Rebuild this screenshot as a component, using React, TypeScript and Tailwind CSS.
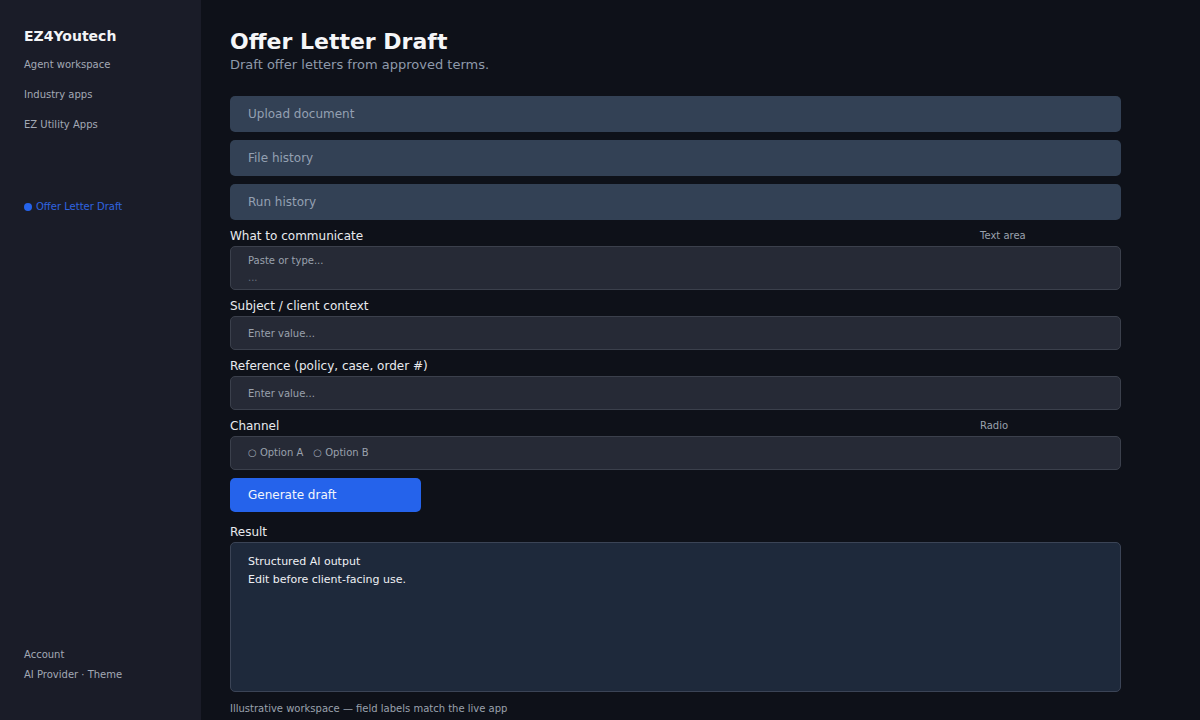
import React from "react";

const font = { fontFamily: '"DejaVu Sans", Verdana, sans-serif' };

function FieldLabel({ label, kind }: { label: string; kind?: string }) {
  return (
    <div className="flex items-start mb-[2px]">
      <span className="w-[750px] pt-[1px] text-[12px] leading-[15px] text-[#e8eaee]">{label}</span>
      {kind && <span className="text-[10px] leading-[15px] text-[#9aa1ad]">{kind}</span>}
    </div>
  );
}

function Collapsible({ title }: { title: string }) {
  return (
    <div className="h-[36px] rounded-[5px] bg-[#334155] flex items-center pl-[18px] text-[12px] text-[#94a0b2]">
      {title}
    </div>
  );
}

function InputBox({ placeholder }: { placeholder: string }) {
  return (
    <div className="h-[34px] rounded-[5px] bg-[#262a36] border border-[#3b404c] flex items-center pl-[17px] text-[10px] text-[#9aa1ad]">
      {placeholder}
    </div>
  );
}

export default function App() {
  return (
    <div className="flex w-full h-[720px] bg-[#0e1119] overflow-hidden" style={font}>
      <aside className="w-[201px] shrink-0 bg-[#1a1c28] flex flex-col pl-[24px] pt-[26px] pb-[38px]">
        <div className="text-[14px] leading-[20px] font-bold text-[#f3f4f6]">EZ4Youtech</div>
        <nav className="mt-[12px] flex flex-col gap-[16px] text-[10px] leading-[14px] text-[#a3a9b5]">
          <div>Agent workspace</div>
          <div>Industry apps</div>
          <div>EZ Utility Apps</div>
        </nav>
        <div className="mt-[68px] flex items-center text-[10px] leading-[14px] text-[#2f64e0]">
          <span className="w-[8px] h-[8px] rounded-full bg-[#2563eb] mr-[4px]" />
          Offer Letter Draft
        </div>
        <div className="mt-auto flex flex-col gap-[6px] text-[10px] leading-[14px] text-[#a3a9b5]">
          <div>Account</div>
          <div>AI Provider · Theme</div>
        </div>
      </aside>
      <main className="flex-1 pl-[29px] pt-[28px]">
        <div className="w-[891px]">
          <h1 className="text-[22px] leading-[28px] font-bold text-[#f5f6f8]">Offer Letter Draft</h1>
          <p className="text-[13px] leading-[18px] text-[#8f9aab]">Draft offer letters from approved terms.</p>
          <div className="mt-[22px] flex flex-col gap-[8px]">
            <Collapsible title="Upload document" />
            <Collapsible title="File history" />
            <Collapsible title="Run history" />
            <div>
              <FieldLabel label="What to communicate" kind="Text area" />
              <div className="h-[44px] rounded-[5px] bg-[#262a36] border border-[#3b404c] pl-[17px] pt-[5px] text-[10px] leading-[17px] text-[#9aa1ad]">
                <div>Paste or type...</div>
                <div className="text-[#6b7280]">...</div>
              </div>
            </div>
            <div>
              <FieldLabel label="Subject / client context" />
              <InputBox placeholder="Enter value..." />
            </div>
            <div>
              <FieldLabel label="Reference (policy, case, order #)" />
              <InputBox placeholder="Enter value..." />
            </div>
            <div>
              <FieldLabel label="Channel" kind="Radio" />
              <div className="h-[34px] rounded-[5px] bg-[#262a36] border border-[#3b404c] flex items-center pl-[17px] pb-[1px] gap-[10px] text-[10px] text-[#9aa1ad]">
                <span>○ Option A</span>
                <span>○ Option B</span>
              </div>
            </div>
            <button className="w-[191px] h-[34px] rounded-[5px] bg-[#2563eb] text-left pl-[18px] text-[12px] text-[#f3f6fc]">
              Generate draft
            </button>
            <div className="mt-[4px]">
              <FieldLabel label="Result" />
              <div className="h-[150px] rounded-[5px] bg-[#1e293b] border border-[#3b4456] pl-[17px] pt-[10px] text-[11px] leading-[18px] text-[#eef0f4]">
                <div>Structured AI output</div>
                <div>Edit before client-facing use.</div>
              </div>
            </div>
          </div>
          <div className="mt-[10px] text-[10px] leading-[14px] text-[#9aa1ad]">
            Illustrative workspace — field labels match the live app
          </div>
        </div>
      </main>
    </div>
  );
}
